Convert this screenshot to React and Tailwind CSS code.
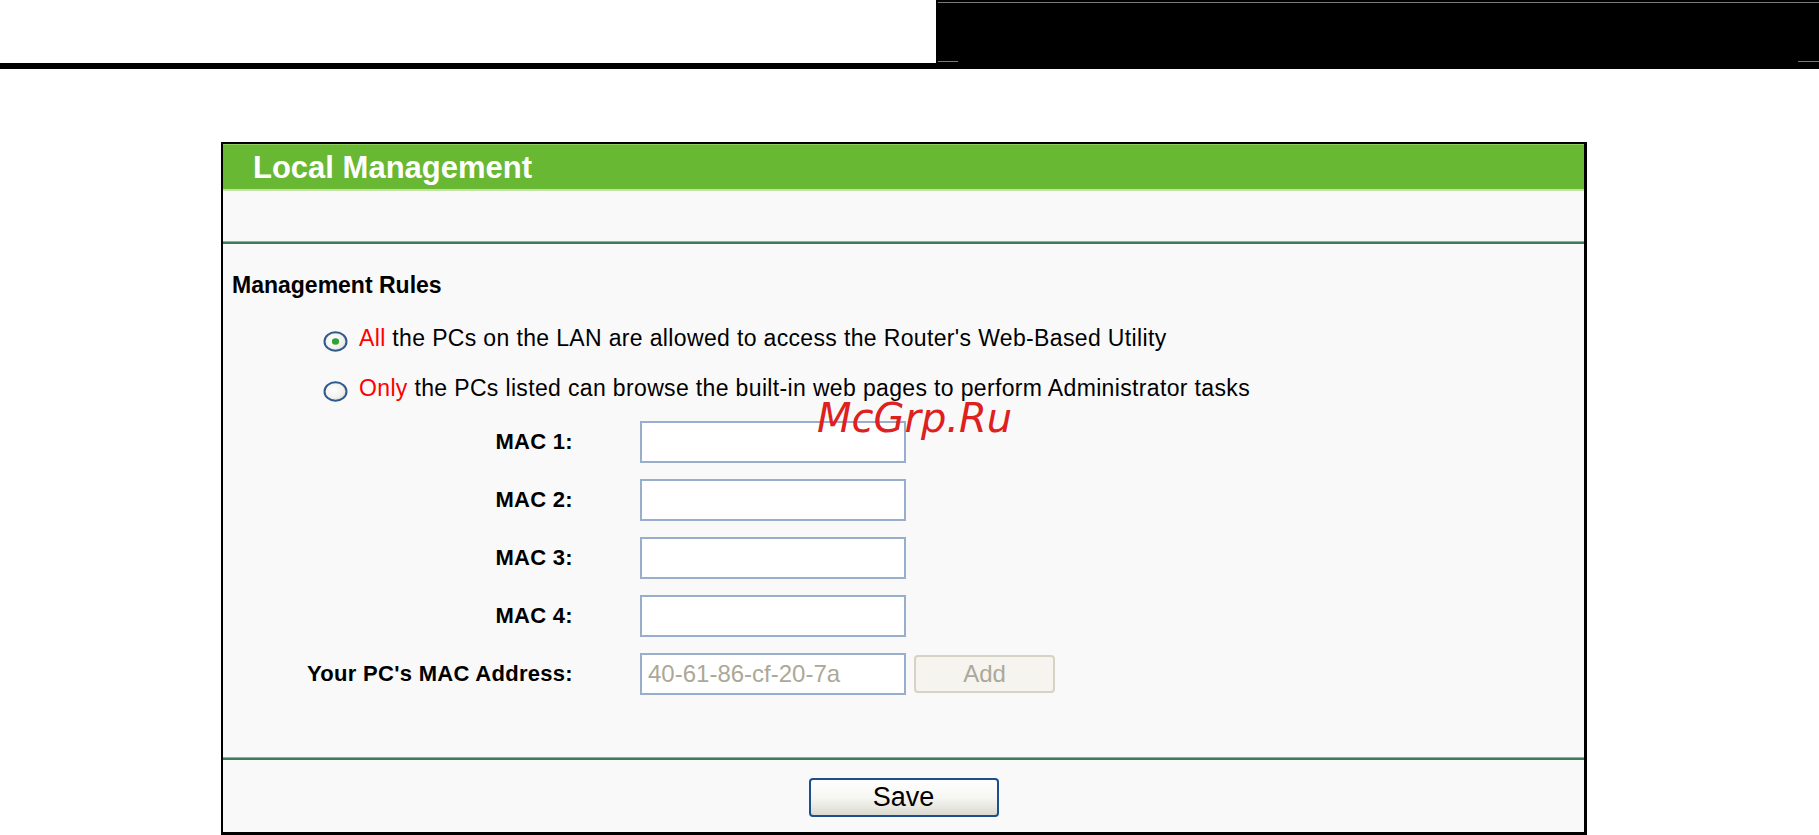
import React from "react";

const sans = "font-['Liberation_Sans',Arial,sans-serif]";

function Radio({ checked }) {
  return (
    <svg width="25" height="21" viewBox="0 0 25 21" className="shrink-0 mt-[7px]">
      <defs>
        <radialGradient id={checked ? "rg1" : "rg2"} cx="40%" cy="40%" r="70%">
          <stop offset="0%" stopColor="#ffffff" />
          <stop offset="60%" stopColor="#f2f2ef" />
          <stop offset="100%" stopColor="#d8d8d2" />
        </radialGradient>
      </defs>
      <ellipse cx="12.5" cy="10.5" rx="11" ry="9.2" fill={`url(#${checked ? "rg1" : "rg2"})`} stroke="#2f5a8c" strokeWidth="2" />
      {checked && <ellipse cx="12.5" cy="10.5" rx="3.6" ry="3.2" fill="#2fa32f" />}
    </svg>
  );
}

function MacRow({ label, value, withAdd }) {
  return (
    <div className="flex items-center h-[58px]">
      <div className="w-[350px] text-right font-bold text-[22px] tracking-[0.3px] leading-none text-black">{label}</div>
      <div className="ml-[67px] w-[266px] h-[42px] border-2 border-[#98aecb] bg-white flex items-center pl-[6px] text-[24px] leading-none text-[#aca899]">
        {value}
      </div>
      {withAdd && (
        <div className="ml-[8px] w-[141px] h-[38px] rounded-[4px] border-2 border-[#d6d3c5] bg-[#f5f4ef] flex items-center justify-center text-[24px] leading-none text-[#aca899]">
          Add
        </div>
      )}
    </div>
  );
}

export default function App() {
  return (
    <div className={`relative w-[1819px] h-[835px] bg-white overflow-hidden ${sans}`}>
      {/* top bar */}
      <div className="flex h-[63px]">
        <div className="flex-1 bg-white" />
        <div className="w-[883px] bg-black flex flex-col">
          <div className="mt-[2px] ml-[2px] h-[1px] bg-[#7a7a7a]" />
          <div className="flex-1" />
          <div className="flex justify-between h-[1px] mb-[1px] ml-[2px]">
            <div className="w-[20px] bg-[#7a7a7a]" />
            <div className="w-[21px] bg-[#7a7a7a]" />
          </div>
        </div>
      </div>
      <div className="h-[6px] bg-black" />
      <div className="h-[73px]" />

      {/* panel */}
      <div className="ml-[221px] w-[1366px] h-[693px] border-l-2 border-t-2 border-r-[3px] border-b-[3px] border-black bg-[#f9f9f9] flex flex-col">
        <div className="h-[45px] bg-[#68b834] border-t border-[#8fcd5c] flex items-center pl-[30px]">
          <span className="text-white font-bold text-[31px] leading-none">Local Management</span>
        </div>
        <div className="h-[2px] bg-[#c4e2a6]" />
        <div className="h-[50px]" />
        <div className="h-[1px] bg-[#86b596]" />
        <div className="h-[2px] bg-[#3a7d56]" />

        {/* content */}
        <div className="h-[513px] pt-[26px] pl-[9px] flex flex-col">
          <div className="h-[30px] flex items-center font-bold text-[23px] leading-none text-black">
            Management Rules
          </div>
          <div className="mt-[13px] pl-[91px]">
            <div className="h-[50px] flex items-center">
              <Radio checked />
              <span className="ml-[11px] text-[23px] tracking-[0.35px] leading-none text-black">
                <span className="text-[#ff0000]">All</span> the PCs on the LAN are allowed to access the Router's Web-Based Utility
              </span>
            </div>
            <div className="h-[50px] flex items-center">
              <Radio />
              <span className="ml-[11px] text-[23px] tracking-[0.35px] leading-none text-black">
                <span className="text-[#ff0000]">Only</span> the PCs listed can browse the built-in web pages to perform Administrator tasks
              </span>
            </div>
          </div>
          <div className="-ml-[9px]">
            <MacRow label="MAC 1:" />
            <MacRow label="MAC 2:" />
            <MacRow label="MAC 3:" />
            <MacRow label="MAC 4:" />
            <MacRow label="Your PC's MAC Address:" value="40-61-86-cf-20-7a" withAdd />
          </div>
        </div>

        <div className="h-[1px] bg-[#86b596]" />
        <div className="h-[2px] bg-[#3a7d56]" />
        <div className="flex-1 flex items-center justify-center pt-[3px]">
          <div className="w-[190px] h-[39px] rounded-[4px] border-2 border-[#1d4f8f] bg-gradient-to-b from-white via-[#f6f6f3] to-[#dcdad0] flex items-center justify-center text-[27px] leading-none text-black">
            Save
          </div>
        </div>
      </div>

      {/* watermark */}
      <div className="absolute left-[817px] top-[398px] font-['DejaVu_Sans',sans-serif] italic text-[40px] leading-[40px] text-[#dd2020]">
        McGrp.Ru
      </div>
    </div>
  );
}
